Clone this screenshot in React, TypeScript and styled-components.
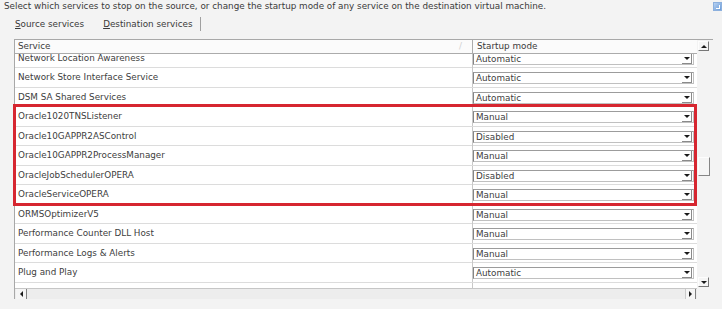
import React from "react";
import styled, { createGlobalStyle } from "styled-components";

const GlobalStyle = createGlobalStyle`
  html, body { margin: 0; padding: 0; }
  body {
    background: #f3f3f3;
    font-family: "DejaVu Sans", Verdana, sans-serif;
    font-size: 8.8px;
    color: #3c3c3c;
    width: 722px;
    height: 309px;
    overflow: hidden;
  }
`;

const Page = styled.div`
  display: flex;
  flex-direction: column;
`;

const InfoLine = styled.div`
  display: flex;
  align-items: flex-start;
  justify-content: space-between;
  height: 13px;
  line-height: 13px;
  padding-left: 4px;
  color: #3a3a3a;
`;

const HelpIcon = styled.div`
  width: 9px;
  height: 9px;
  margin-top: 2px;
  background: linear-gradient(135deg, #b7d2f2, #6b9bd8);
  border: 1px solid #8cb0de;
  box-sizing: border-box;
  position: relative;
  &::after {
    content: "";
    position: absolute;
    left: 2px;
    top: 2px;
    width: 3px;
    height: 3px;
    border-right: 1px solid #fff;
    border-bottom: 1px solid #fff;
  }
`;

const TabBar = styled.div`
  display: flex;
  align-items: center;
  height: 16px;
  margin-top: 3px;
  padding-left: 15px;
`;

const Tab = styled.div<{ $gap: number }>`
  line-height: 16px;
  margin-right: ${(p) => p.$gap}px;
  color: #3a3a3a;
  u { text-decoration: underline; text-underline-offset: 1px; }
`;

const TabDivider = styled.div`
  width: 1px;
  height: 14px;
  background: #a0a0a0;
`;

const Frame = styled.div`
  position: relative;
  margin-top: 7px;
  margin-left: 14px;
  width: 698px;
  display: grid;
  grid-template-columns: 682px 1fr;
  grid-template-rows: 248px 11px;
  border-top: 1px solid #a8a8a8;
  border-left: 1px solid #a8a8a8;
`;

const ListArea = styled.div`
  grid-column: 1;
  grid-row: 1;
  display: flex;
  flex-direction: column;
  overflow: hidden;
  background: #fff;
`;

const Header = styled.div`
  display: grid;
  grid-template-columns: 457px 1fr;
  height: 13px;
  line-height: 13px;
  background: #fbfbfb;
  border-bottom: 1px solid #ababab;
  flex: none;
`;

const HeaderCell = styled.div<{ $divider?: boolean }>`
  position: relative;
  padding-left: ${(p) => (p.$divider ? 4 : 3)}px;
  border-left: ${(p) => (p.$divider ? "1px solid #ababab" : "none")};
  color: #3a3a3a;
`;

const SortMark = styled.span`
  position: absolute;
  right: 10px;
  top: 0;
  color: #d2d2d2;
`;

const Body = styled.div`
  flex: 1;
  overflow: hidden;
  background: #fff;
`;

const List = styled.div`
  margin-top: -5.5px;
`;

const Row = styled.div`
  display: grid;
  grid-template-columns: 457px 1fr;
  height: 19.5px;
  box-sizing: border-box;
  border-bottom: 1px solid #dcdcdc;
`;

const NameCell = styled.div`
  padding-left: 3px;
  line-height: 19px;
  white-space: nowrap;
  color: #404040;
`;

const ModeCell = styled.div`
  border-left: 1px solid #c8c8c8;
  padding-top: 4px;
  padding-right: 3px;
`;

const Combo = styled.div`
  display: flex;
  height: 12px;
  box-sizing: border-box;
  border: 1px solid #c0c0c0;
  border-left-color: #858585;
  border-top-color: #9c9c9c;
  background: #fff;
`;

const ComboText = styled.div`
  flex: 1;
  padding-left: 2px;
  line-height: 10px;
  color: #404040;
`;

const ComboButton = styled.div`
  width: 10px;
  margin-right: 1px;
  display: flex;
  align-items: center;
  justify-content: center;
  border-right: 1px solid #8a8a8a;
  border-bottom: 1px solid #8a8a8a;
  box-sizing: border-box;
`;

const Tri = styled.div<{ $dir: "up" | "down" | "left" | "right" }>`
  width: 0;
  height: 0;
  ${(p) =>
    p.$dir === "down"
      ? "border-left: 3px solid transparent; border-right: 3px solid transparent; border-top: 3px solid #1a1a1a;"
      : p.$dir === "up"
      ? "border-left: 3px solid transparent; border-right: 3px solid transparent; border-bottom: 3px solid #1a1a1a;"
      : p.$dir === "left"
      ? "border-top: 3px solid transparent; border-bottom: 3px solid transparent; border-right: 3px solid #1a1a1a;"
      : "border-top: 3px solid transparent; border-bottom: 3px solid transparent; border-left: 3px solid #1a1a1a;"}
`;

const VScroll = styled.div`
  grid-column: 2;
  grid-row: 1;
  display: flex;
  flex-direction: column;
  padding: 1px 3px 1px 1px;
  background: #f3f3f3;
`;

const ScrollButton = styled.div`
  width: 11px;
  height: 10px;
  flex: none;
  display: flex;
  align-items: center;
  justify-content: center;
  box-sizing: border-box;
  background: #f5f5f5;
  border: 1px solid #fdfdfd;
  border-right-color: #777;
  border-bottom-color: #777;
`;

const VTrack = styled.div`
  flex: 1;
  display: flex;
  flex-direction: column;
`;

const Thumb = styled.div<{ $top: number; $size: number }>`
  margin-top: ${(p) => p.$top}px;
  height: ${(p) => p.$size}px;
  width: 12px;
  box-sizing: border-box;
  border: 1px solid #fdfdfd;
  border-right-color: #858585;
  border-bottom-color: #858585;
  background: #f5f5f5;
`;

const HScroll = styled.div`
  grid-column: 1;
  grid-row: 2;
  display: flex;
  align-items: stretch;
  background: #ededed;
  border-top: 1px solid #c6c6c6;
  box-sizing: border-box;
  padding-left: 1px;
`;

const HButton = styled.div<{ $side: "left" | "right" }>`
  width: 11px;
  display: flex;
  align-items: center;
  justify-content: center;
  box-sizing: border-box;
  background: #f5f5f5;
  ${(p) =>
    p.$side === "left"
      ? "border-right: 1px solid #808080;"
      : "border-left: 1px solid #cacaca; border-right: 1px solid #808080; margin-right: 1px;"}
`;

const HTrack = styled.div`
  flex: 1;
`;

const Highlight = styled.div`
  position: absolute;
  left: -2px;
  top: 64px;
  width: 684px;
  height: 102px;
  box-sizing: border-box;
  border: 3px solid #d62630;
  pointer-events: none;
`;

const services: [string, string][] = [
  ["Network Location Awareness", "Automatic"],
  ["Network Store Interface Service", "Automatic"],
  ["DSM SA Shared Services", "Automatic"],
  ["Oracle1020TNSListener", "Manual"],
  ["Oracle10GAPPR2ASControl", "Disabled"],
  ["Oracle10GAPPR2ProcessManager", "Manual"],
  ["OracleJobSchedulerOPERA", "Disabled"],
  ["OracleServiceOPERA", "Manual"],
  ["ORMSOptimizerV5", "Manual"],
  ["Performance Counter DLL Host", "Manual"],
  ["Performance Logs & Alerts", "Manual"],
  ["Plug and Play", "Automatic"],
];

export default function App() {
  return (
    <Page>
      <GlobalStyle />
      <InfoLine>
        <span>
          Select which services to stop on the source, or change the startup mode of any service on the destination virtual machine.
        </span>
        <HelpIcon />
      </InfoLine>
      <TabBar>
        <Tab $gap={19}>
          <u>S</u>ource services
        </Tab>
        <Tab $gap={7}>
          <u>D</u>estination services
        </Tab>
        <TabDivider />
      </TabBar>
      <Frame>
        <ListArea>
          <Header>
            <HeaderCell>
              Service
              <SortMark>/</SortMark>
            </HeaderCell>
            <HeaderCell $divider>Startup mode</HeaderCell>
          </Header>
          <Body>
            <List>
              {services.map(([name, mode]) => (
                <Row key={name}>
                  <NameCell>{name}</NameCell>
                  <ModeCell>
                    <Combo>
                      <ComboText>{mode}</ComboText>
                      <ComboButton>
                        <Tri $dir="down" />
                      </ComboButton>
                    </Combo>
                  </ModeCell>
                </Row>
              ))}
              <Row>
                <NameCell />
                <ModeCell />
              </Row>
            </List>
          </Body>
        </ListArea>
        <VScroll>
          <ScrollButton>
            <Tri $dir="up" />
          </ScrollButton>
          <VTrack>
            <Thumb $top={106} $size={19} />
          </VTrack>
          <ScrollButton>
            <Tri $dir="down" />
          </ScrollButton>
        </VScroll>
        <HScroll>
          <HButton $side="left">
            <Tri $dir="left" />
          </HButton>
          <HTrack />
          <HButton $side="right">
            <Tri $dir="right" />
          </HButton>
        </HScroll>
        <Highlight />
      </Frame>
    </Page>
  );
}
